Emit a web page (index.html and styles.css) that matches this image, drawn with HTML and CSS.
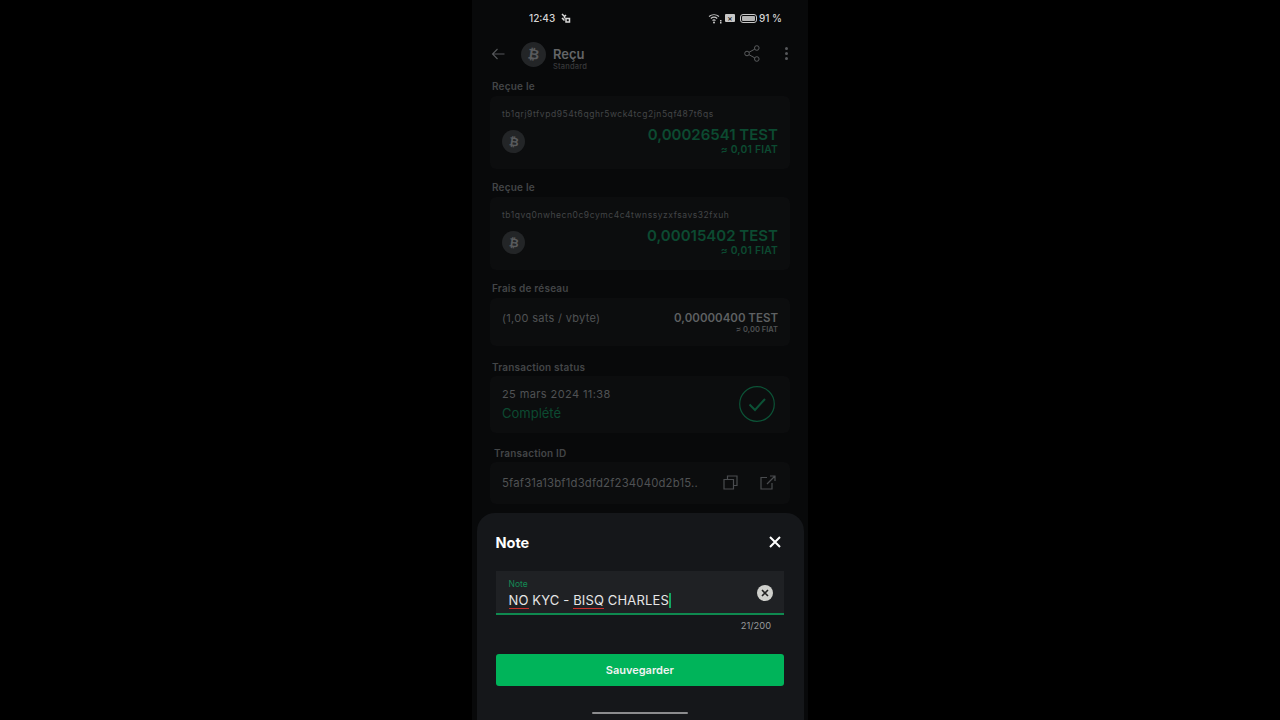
FILE: index.html
```html
<!DOCTYPE html>
<html>

<head>
    <meta charset="UTF-8">
    <meta name="viewport" content="width=device-width">
    <title>Note</title>
    <link rel="stylesheet" href="styles.css">
</head>

<body>
    <main class="phone">
        <div class="status">
            <div class="status-left">
                <span>12:43</span>
                <svg width="10" height="10" viewBox="0 0 10 10"><path d="M1 1l2.500 2.500v2M3.500 3.500L5 2M5 5.500h3.500v3.500H5zM1 5l2.500 2.500" fill="none" stroke="#d8d8d8" stroke-width="1.500"/></svg>
            </div>
            <div class="status-right">
                <svg class="wifi" width="14" height="11" viewBox="0 0 14 11"><path d="M1 3.500a8 8 0 0 1 10 0M2.800 5.500a5 5 0 0 1 6.400 0M4.500 7.500a2.500 2.500 0 0 1 3 0" fill="none" stroke="#c8c8c8" stroke-width="1.100"/><circle cx="6" cy="9.500" r="1" fill="#c8c8c8"/><rect x="12" y="7" width="1.500" height="1.500" fill="#c8c8c8"/><rect x="12" y="9" width="1.500" height="1.500" fill="#c8c8c8"/></svg>
                <span class="sim">×</span>
                <span class="battery"><i></i></span>
                <span>91 %</span>
            </div>
        </div>

        <header class="appbar">
            <svg class="back" width="14" height="12" viewBox="0 0 14 12"><path d="M13.500 6H1.500M6.500 1L1.500 6l5 5" fill="none" stroke="#55575a" stroke-width="1.100"/></svg>
            <span class="coin coin-big"><i>₿</i></span>
            <div class="appbar-title">
                <strong>Reçu</strong>
                <small>Standard</small>
            </div>
            <svg class="share" width="16" height="17" viewBox="0 0 16 17"><circle cx="3" cy="8.500" r="2.300" /><circle cx="12.800" cy="3" r="2.300" /><circle cx="12.800" cy="14" r="2.300" /><path d="M5 7.300l5.800-3.200M5 9.700l5.800 3.200" /></svg>
            <span class="dots"><i></i><i></i><i></i></span>
        </header>

        <section class="list">
            <h4>Reçue le</h4>
            <div class="card card-tx">
                <p class="addr">tb1qrj9tfvpd954t6qghr5wck4tcg2jn5qf487t6qs</p>
                <div class="tx-row">
                    <span class="coin"><i>₿</i></span>
                    <div class="amount">
                        <b>0,00026541 TEST</b>
                        <small>≈ 0,01 FIAT</small>
                    </div>
                </div>
            </div>

            <h4>Reçue le</h4>
            <div class="card card-tx">
                <p class="addr">tb1qvq0nwhecn0c9cymc4c4twnssyzxfsavs32fxuh</p>
                <div class="tx-row">
                    <span class="coin"><i>₿</i></span>
                    <div class="amount">
                        <b>0,00015402 TEST</b>
                        <small>≈ 0,01 FIAT</small>
                    </div>
                </div>
            </div>

            <h4>Frais de réseau</h4>
            <div class="card card-fee">
                <span class="fee-rate">(1,00 sats / vbyte)</span>
                <div class="amount amount-grey">
                    <b>0,00000400 TEST</b>
                    <small>≈ 0,00 FIAT</small>
                </div>
            </div>

            <h4 class="h-status">Transaction status</h4>
            <div class="card card-status">
                <div>
                    <p class="date">25 mars 2024 11:38</p>
                    <p class="done">Complété</p>
                </div>
                <svg width="36" height="36" viewBox="0 0 36 36"><circle cx="18" cy="18" r="17.300" fill="none" stroke="#0c5236" stroke-width="1.200"/><path d="M10.500 18.500l5.500 5.500 10-11" fill="none" stroke="#0c5236" stroke-width="2"/></svg>
            </div>

            <h4 class="h-id">Transaction ID</h4>
            <div class="card card-id">
                <span class="txid">5faf31a13bf1d3dfd2f234040d2b15..</span>
                <svg width="15" height="15" viewBox="0 0 15 15"><path d="M4.500 4.500V1h9.500v9.500h-3.500M1 4.500h9.500V14H1z" fill="none" stroke="#4a4c4f" stroke-width="1.200"/></svg>
                <svg class="ext" width="16" height="15" viewBox="0 0 16 15"><path d="M7 2.500H1V14h11V8M7 9l8-8M10 1h5v5" fill="none" stroke="#4a4c4f" stroke-width="1.200"/></svg>
            </div>
        </section>

        <div class="sheet">
            <div class="sheet-head">
                <h2>Note</h2>
                <svg width="12" height="12" viewBox="0 0 12 12"><path d="M1 1l10 10M11 1L1 11" stroke="#fff" stroke-width="2"/></svg>
            </div>

            <div class="field">
                <div class="field-text">
                    <label>Note</label>
                    <div class="value"><u>NO</u> KYC - <u>BISQ</u> CHARLES<span class="caret"></span></div>
                </div>
                <span class="clear">
                    <svg width="8" height="8" viewBox="0 0 8 8"><path d="M1 1l6 6M7 1L1 7" stroke="#222" stroke-width="1.600"/></svg>
                </span>
            </div>
            <div class="counter">21/200</div>

            <button class="save">Sauvegarder</button>
            <div class="home-bar"></div>
        </div>
    </main>
</body>

</html>
```

FILE: styles.css
```css
* {
    box-sizing: border-box;
}

body {
    margin: 0;
    height: 720px;
    overflow: hidden;
    background: #000;
    font-family: Inter, "Liberation Sans", sans-serif;
}

p,
h2,
h4 {
    margin: 0;
}

.phone {
    position: relative;
    width: 336px;
    height: 720px;
    margin: 0 auto;
    background: #08090a;
    overflow: hidden;
}

/* Barre de statut */
.status {
    display: flex;
    justify-content: space-between;
    align-items: center;
    height: 36px;
    padding: 0 26px 0 57px;
    font-size: 10px;
    font-weight: 500;
    color: #d6d6d6;
}

.status-left,
.status-right {
    display: flex;
    align-items: center;
}

.status-left {
    gap: 6px;
}

.wifi {
    margin-right: 3px;
}

.sim {
    width: 10px;
    height: 8px;
    margin-right: 5px;
    border-radius: 1px;
    background: #c8c8c8;
    color: #111;
    font-size: 8px;
    line-height: 8px;
    text-align: center;
}

.battery {
    width: 17px;
    height: 9px;
    margin-right: 2px;
    padding: 1px;
    border: 1px solid #c8c8c8;
    border-radius: 3px;
}

.battery i {
    display: block;
    height: 100%;
    border-radius: 1px;
    background: #b4b4b4;
}

/* En-tete */
.appbar {
    display: flex;
    align-items: center;
    height: 36px;
    padding-left: 19px;
}

.back {
    margin: 0 16px 1px 0;
}

.coin {
    display: flex;
    align-items: center;
    justify-content: center;
    width: 23px;
    height: 23px;
    border-radius: 50%;
    background: #232527;
    color: #595b5d;
    font-family: "DejaVu Sans", sans-serif;
    font-size: 12px;
    font-weight: bold;
}

.coin i {
    font-style: normal;
    transform: rotate(8deg);
}

.coin-big {
    width: 25px;
    height: 25px;
    font-size: 14px;
}

.appbar-title {
    display: flex;
    flex-direction: column;
    margin: 11px auto 0 7px;
    color: #636567;
}

.appbar-title strong {
    font-size: 13px;
    font-weight: 600;
    line-height: 15px;
}

.appbar-title small {
    color: #38393b;
    font-size: 7.500px;
    font-weight: 500;
    line-height: 10px;
    letter-spacing: 0.2px;
}

.share {
    margin: 0 25px 1px 0;
    fill: none;
    stroke: #5a5c5e;
}

.dots {
    display: flex;
    flex-direction: column;
    gap: 2px;
    margin: 0 20px 2px 0;
}

.dots i {
    width: 3px;
    height: 3px;
    border-radius: 50%;
    background: #55575a;
}

/* Liste */
.list {
    display: flex;
    flex-direction: column;
    padding: 8px 18px 0;
}

.list h4 {
    height: 12px;
    padding-left: 2px;
    color: #434547;
    font-size: 10px;
    font-weight: 600;
    line-height: 12px;
    letter-spacing: 0.2px;
}

.card {
    margin-top: 4px;
    border-radius: 6px;
    background: #0c0d0e;
    color: #505254;
}

.card-tx {
    height: 73px;
    margin-bottom: 12px;
    padding: 11px 12px 0 12px;
}

.addr {
    color: #434547;
    font-size: 8.500px;
    line-height: 14px;
    letter-spacing: 0.55px;
}

.tx-row {
    display: flex;
    justify-content: space-between;
    align-items: flex-start;
    margin-top: 6px;
}

.tx-row .coin {
    margin-top: 3px;
}

.amount {
    display: flex;
    flex-direction: column;
    align-items: flex-end;
}

.amount b {
    color: #0c4a31;
    font-size: 15px;
    font-weight: 600;
    line-height: 16px;
}

.amount small {
    color: #0c4a31;
    font-size: 10.300px;
    font-weight: 600;
    line-height: 12px;
    letter-spacing: 0.2px;
}

.amount-grey b {
    color: #5e6062;
    font-size: 11.500px;
    line-height: 14px;
}

.amount-grey small {
    color: #505254;
    font-size: 7.500px;
    line-height: 10px;
    letter-spacing: 0;
}

.card-fee {
    display: flex;
    justify-content: space-between;
    align-items: center;
    height: 48px;
    margin-bottom: 14.500px;
    padding: 1px 12px 0;
}

.fee-rate {
    margin-bottom: 10px;
    font-size: 11px;
    letter-spacing: 0.3px;
}

.h-status {
    letter-spacing: 0.3px;
}

.card-status {
    display: flex;
    justify-content: space-between;
    align-items: center;
    height: 57px;
    margin-top: 3px;
    margin-bottom: 14px;
    padding: 0 15px 0 12px;
}

.date {
    font-size: 11px;
    line-height: 18px;
    letter-spacing: 0.4px;
}

.done {
    color: #0c4a31;
    font-size: 13px;
    line-height: 20px;
}

.list .h-id {
    padding-left: 4px;
}

.card-id {
    display: flex;
    align-items: center;
    height: 42px;
    margin-top: 3px;
    padding: 0 14px 0 12px;
}

.txid {
    flex: 1;
    font-size: 11.300px;
    letter-spacing: 0.2px;
    white-space: nowrap;
}

.ext {
    margin-left: 22px;
}

/* Feuille du bas */
.sheet {
    position: absolute;
    top: 513px;
    left: 5px;
    right: 4px;
    bottom: 0;
    padding: 0 20px 0 18.500px;
    border-radius: 18px 18px 0 0;
    background: #15171a;
}

.sheet-head {
    display: flex;
    justify-content: space-between;
    align-items: center;
    height: 58px;
    padding-right: 3.500px;
    color: #fff;
}

.sheet-head h2 {
    font-size: 14.500px;
    font-weight: 700;
}

.field {
    display: flex;
    justify-content: space-between;
    align-items: center;
    height: 44px;
    padding: 0 11px 0 13px;
    border-bottom: 2px solid #0f8a50;
    background: #1f2124;
}

.field-text {
    padding-top: 3px;
}

.field-text label {
    display: block;
    color: #138a55;
    font-size: 8.500px;
    line-height: 10px;
}

.value {
    margin-top: 3px;
    color: #e6e6e6;
    font-size: 13px;
    line-height: 17px;
    letter-spacing: 0.15px;
    white-space: pre;
}

.value u {
    text-decoration: none;
    border-bottom: 1.500px solid #c9302c;
}

.caret {
    display: inline-block;
    width: 1.500px;
    height: 15px;
    margin-left: 0.500px;
    vertical-align: -3px;
    background: #12a860;
}

.clear {
    display: flex;
    align-items: center;
    justify-content: center;
    width: 16px;
    height: 16px;
    margin-bottom: -1px;
    border-radius: 50%;
    background: #cfd0cc;
}

.counter {
    padding: 5px 13px 0 0;
    color: #97999b;
    font-size: 9.300px;
    line-height: 11px;
    text-align: right;
}

.save {
    display: block;
    width: 100%;
    height: 32px;
    margin-top: 22.500px;
    border: none;
    border-radius: 3px;
    background: #00b45a;
    color: #f2f2f2;
    font-family: inherit;
    font-size: 11px;
    font-weight: 600;
}

.home-bar {
    position: absolute;
    left: 115px;
    bottom: 6px;
    width: 96px;
    height: 2px;
    border-radius: 1px;
    background: #8b8c8e;
}
```
